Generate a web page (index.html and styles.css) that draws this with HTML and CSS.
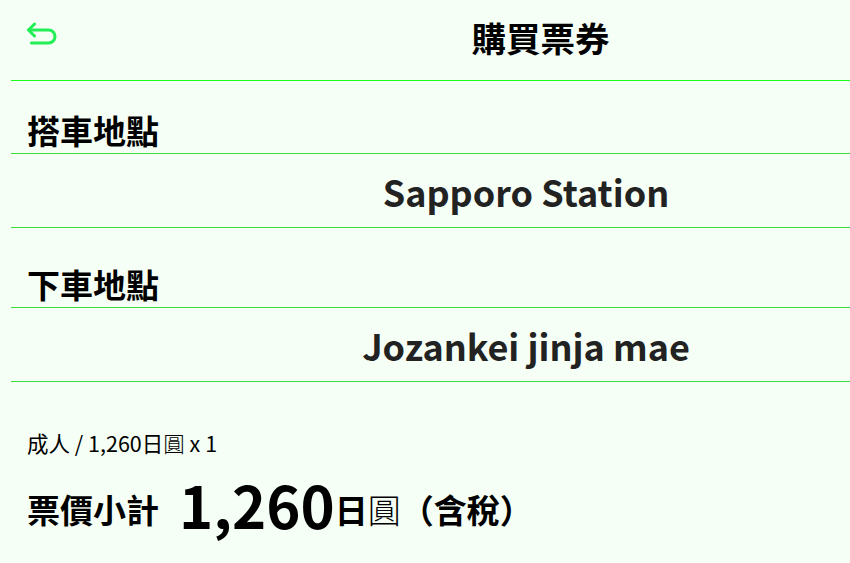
FILE: index.html
```html
<!DOCTYPE html>
<html lang="zh-Hant">
<head>
<meta charset="utf-8">
<title>購買票券</title>
<link rel="stylesheet" href="styles.css">
</head>
<body>
<div class="page">
  <header class="header">
    <div class="back">
      <svg width="32" height="28" viewBox="0 0 32 28" fill="none" stroke="#22ee55" stroke-width="3" stroke-linecap="round" stroke-linejoin="round">
        <path d="M8.5 2 L2.5 8 L8.5 14"/>
        <path d="M3 8 H22.5 A6.5 6.5 0 0 1 22.5 21 H5.5"/>
      </svg>
    </div>
    <h1 class="title">購買票券</h1>
  </header>

  <section class="field">
    <div class="label">搭車地點</div>
    <div class="value">Sapporo Station</div>
  </section>

  <section class="field">
    <div class="label">下車地點</div>
    <div class="value">Jozankei jinja mae</div>
  </section>

  <section class="summary">
    <div class="detail">成人 / 1,260日<span class="thin">圓</span> x 1</div>
    <div class="total">
      <span class="total-label">票價小計</span>
      <span class="amount">1,260</span><span class="unit">日</span><span class="unit thin">圓</span><span class="unit">（含稅）</span>
    </div>
  </section>
</div>
</body>
</html>
```

FILE: styles.css
```css
html, body {
  margin: 0;
  padding: 0;
  background: #f5fff5;
}
body {
  font-family: "Noto Sans CJK TC", "Noto Sans", sans-serif;
  color: #000;
  width: 850px;
  height: 563px;
  overflow: hidden;
}
.page {
  margin-left: 11px;
}
.header {
  height: 80px;
  border-bottom: 1px solid #1aff1a;
  display: flex;
  align-items: center;
}
.back {
  width: 32px;
  height: 28px;
  margin-left: 15px;
  margin-top: -8px;
}
.back svg {
  display: block;
}
.title {
  flex: 1;
  margin: -7px 0 0 0;
  text-align: center;
  padding-left: 173px;
  font-size: 34.5px;
  font-weight: 700;
  line-height: 40px;
}
.field {
  display: flex;
  flex-direction: column;
}
.label {
  height: 73px;
  box-sizing: border-box;
  padding: 29px 0 0 16px;
  font-size: 33px;
  font-weight: 700;
  line-height: 40px;
  border-bottom: 1px solid #3ade3a;
}
.value {
  height: 74px;
  box-sizing: border-box;
  border-bottom: 1px solid #3ade3a;
  text-align: center;
  padding-left: 191px;
  font-size: 36px;
  font-weight: 700;
  line-height: 74px;
  color: #222;
}
.field + .field .label {
  height: 80px;
  padding-top: 36px;
}
.summary {
  padding: 46px 0 0 16px;
}
.detail {
  font-size: 21.5px;
  line-height: 30px;
}
.thin {
  font-family: "Noto Sans CJK JP", sans-serif;
  font-weight: 300;
}
.total {
  margin-top: 13px;
  display: flex;
  align-items: center;
}
.total-label {
  font-size: 33px;
  font-weight: 700;
  margin-right: 20px;
  line-height: 40px;
}
.amount {
  font-size: 58px;
  font-weight: 700;
  line-height: 66px;
  margin-bottom: 9px;
}
.unit {
  font-size: 33px;
  font-weight: 700;
  line-height: 40px;
}
.unit.thin {
  font-weight: 300;
}
```
